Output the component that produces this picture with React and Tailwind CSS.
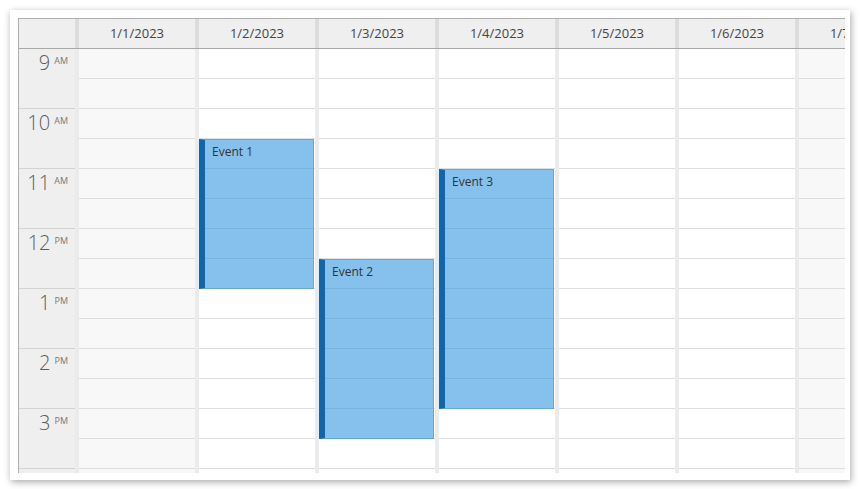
const days = ["1/1/2023", "1/2/2023", "1/3/2023", "1/4/2023", "1/5/2023", "1/6/2023", "1/7/2023"];

const hours = [
  ["9", "AM"],
  ["10", "AM"],
  ["11", "AM"],
  ["12", "PM"],
  ["1", "PM"],
  ["2", "PM"],
  ["3", "PM"],
  ["", ""],
];

// events keyed by day index, positions in px from top of the day column (30px per half hour)
const events = [
  { day: 1, text: "Event 1", pos: "top-[90px] h-[150px]" },
  { day: 2, text: "Event 2", pos: "top-[210px] h-[180px]" },
  { day: 3, text: "Event 3", pos: "top-[120px] h-[240px]" },
];

const slots = Array.from({ length: 15 }, (_, i) => i);

function HourCell({ hour, suffix }) {
  return (
    <div className="h-[60px] border-b border-[#d2d2d2] flex justify-end items-start pt-[4px] pr-[7px] text-[#5c5c5c]">
      <span className="text-[20px] leading-[20px] font-light">{hour}</span>
      <span className="text-[9px] leading-[9px] ml-[4px] mt-[3px] text-[#777]">{suffix}</span>
    </div>
  );
}

function DayColumn({ index }) {
  const weekend = index === 0 || index === 6;
  return (
    <div className="flex w-[120px] shrink-0">
      <div className="w-1 bg-[#ebebeb]" />
      <div className={`relative w-[116px] ${weekend ? "bg-[#f8f8f8]" : "bg-white"}`}>
        {slots.map((s) => (
          <div key={s} className="h-[30px] border-b border-[#dedede]" />
        ))}
        {events
          .filter((e) => e.day === index)
          .map((e) => (
            <div
              key={e.text}
              className={`absolute left-0 w-[115px] ${e.pos} bg-[rgba(53,150,223,0.6)] border border-[#5aaae9] border-l-[6px] border-l-[#1066a8] pl-[7px] pt-[4px] text-[12px] leading-[16px] text-[#333]`}
            >
              {e.text}
            </div>
          ))}
      </div>
    </div>
  );
}

export default function App() {
  return (
    <div className="w-[860px] h-[489px] bg-white p-[10px] font-['Open_Sans',sans-serif]">
      <div className="w-[840px] h-[470px] bg-white pl-2 pt-2 shadow-[1px_2px_7px_rgba(0,0,0,0.35)]">
        <div className="w-[827px] h-[455px] overflow-hidden border-t border-l border-[#b0b0b0]">
          {/* header */}
          <div className="flex h-[30px] border-b border-[#a8a8a8] bg-[#efefef] text-[13px] text-[#444]">
            <div className="w-[56px] shrink-0" />
            {days.map((d) => (
              <div key={d} className="flex w-[120px] shrink-0">
                <div className="w-1 bg-[#dcdcdc]" />
                <div className="w-[116px] flex items-center justify-center whitespace-nowrap">{d}</div>
              </div>
            ))}
          </div>
          {/* body */}
          <div className="flex">
            <div className="w-[56px] shrink-0 bg-[#efefef]">
              {hours.map(([h, s], i) => (
                <HourCell key={i} hour={h} suffix={s} />
              ))}
            </div>
            <div className="flex">
              {days.map((d, i) => (
                <DayColumn key={d} index={i} />
              ))}
            </div>
          </div>
        </div>
      </div>
    </div>
  );
}
